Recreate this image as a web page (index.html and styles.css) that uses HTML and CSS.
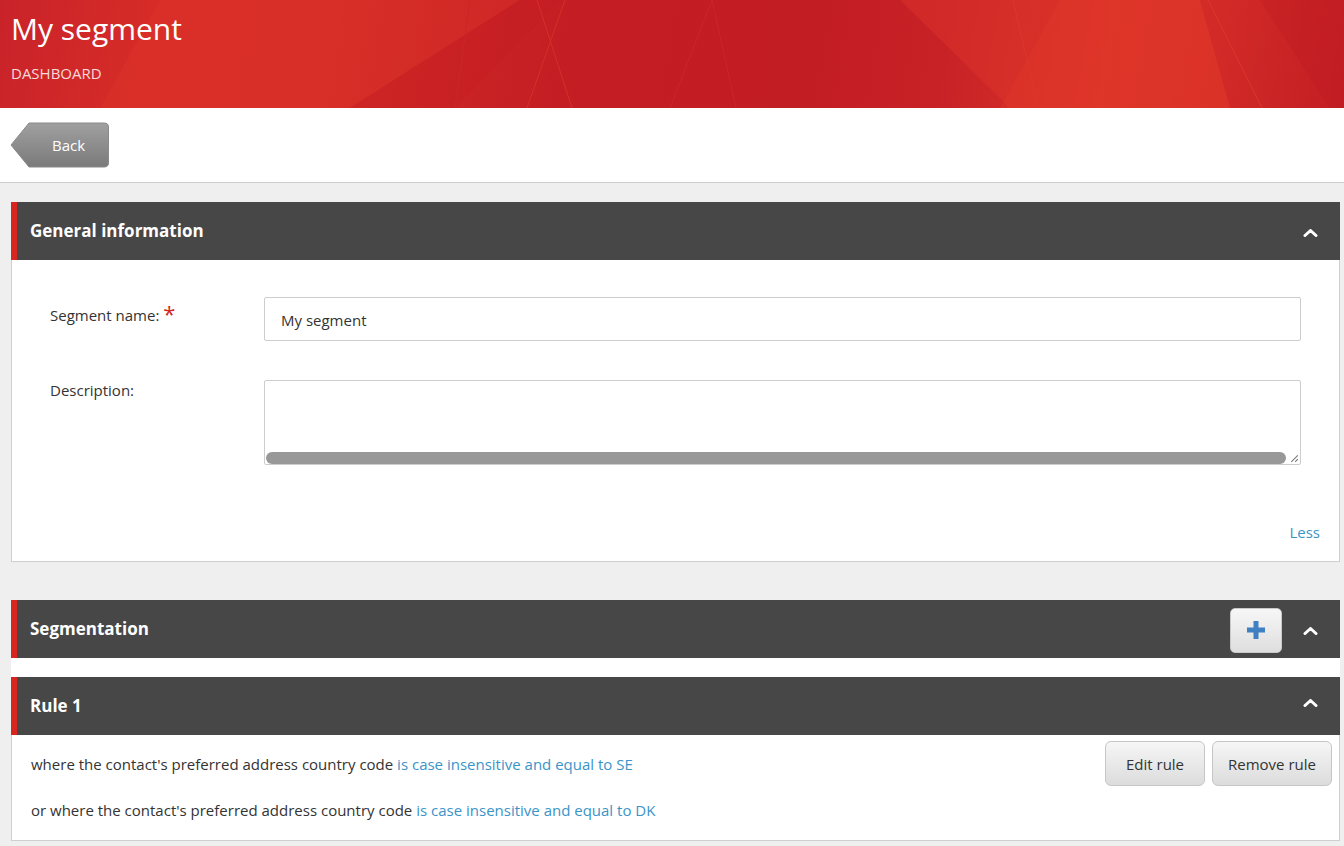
FILE: index.html
```html
<!DOCTYPE html>
<html lang="en">
<head>
<meta charset="utf-8">
<title>My segment</title>
<link rel="stylesheet" href="styles.css">
</head>
<body>
<header class="hero">
  <svg class="hero-art" viewBox="0 0 1344 108" preserveAspectRatio="none" aria-hidden="true">
    <polygon points="100,108 160,0 520,0 350,108" fill="#e0392c" opacity="0.3"/>
    <polygon points="350,108 520,0 560,0 455,108" fill="#c21a21" opacity="0.3"/>
    <polygon points="900,0 1010,108 1230,108 1200,0 1060,0" fill="#e0372a" opacity="0.4"/>
    <polygon points="1060,0 1200,0 1230,108 1000,108" fill="#e33a2c" opacity="0.3"/>
    <polygon points="1260,0 1344,0 1344,108 1330,108" fill="#b81820" opacity="0.25"/>
    <line x1="537" y1="0" x2="572" y2="108" stroke="#d3302a" stroke-width="1"/>
    <line x1="565" y1="0" x2="527" y2="108" stroke="#d3302a" stroke-width="1"/>
    <line x1="470" y1="0" x2="455" y2="108" stroke="#c9272a" stroke-width="1"/>
    <line x1="712" y1="0" x2="736" y2="108" stroke="#ca2629" stroke-width="1"/>
    <line x1="712" y1="0" x2="670" y2="108" stroke="#ca2629" stroke-width="1"/>
    <line x1="1013" y1="0" x2="1038" y2="108" stroke="#dc372b" stroke-width="1"/>
    <line x1="1208" y1="0" x2="1262" y2="108" stroke="#dc372b" stroke-width="1"/>
  </svg>
  <h1 class="hero-title">My segment</h1>
  <div class="hero-sub">DASHBOARD</div>
</header>

<div class="toolbar">
  <button class="back" type="button">
    <svg class="back-shape" viewBox="0 0 100 46" aria-hidden="true">
      <defs>
        <linearGradient id="bg" x1="0" y1="0" x2="0" y2="1">
          <stop offset="0" stop-color="#a0a0a0"/>
          <stop offset="1" stop-color="#7a7a7a"/>
        </linearGradient>
      </defs>
      <path d="M19,1 H94 Q98.5,1 98.5,5 V41 Q98.5,45 94,45 H19 L1,23 Z" fill="url(#bg)" stroke="#8a8a8a" stroke-width="1"/>
    </svg>
    <span class="back-label">Back</span>
  </button>
</div>

<main class="content">
  <section class="panel">
    <div class="panel-head">
      <h2 class="panel-title">General information</h2>
      <div class="head-tools">
        <svg class="chev" viewBox="0 0 15 8" aria-hidden="true"><polyline points="2,6.5 7.5,1.5 13,6.5" fill="none" stroke="#fff" stroke-width="3" stroke-linecap="round" stroke-linejoin="round"/></svg>
      </div>
    </div>
    <div class="panel-body form">
      <div class="form-row">
        <label class="form-label">Segment name: <span class="req">*</span></label>
        <div class="input">My segment</div>
      </div>
      <div class="form-row desc">
        <label class="form-label">Description:</label>
        <div class="textarea">
          <div class="scrollrow">
            <div class="hbar"></div>
            <svg class="grip" viewBox="0 0 12 12" aria-hidden="true"><line x1="4" y1="10" x2="10" y2="4" stroke="#777" stroke-width="1"/><line x1="7.5" y1="10" x2="10" y2="7.5" stroke="#777" stroke-width="1"/></svg>
          </div>
        </div>
      </div>
      <div class="less-row"><a class="link">Less</a></div>
    </div>
  </section>

  <section class="panel seg">
    <div class="panel-head">
      <h2 class="panel-title">Segmentation</h2>
      <div class="head-tools">
        <button class="add" type="button" aria-label="Add">
          <svg viewBox="0 0 18 18" aria-hidden="true"><path d="M9 0 V18 M0 9 H18" stroke="#3f7fc2" stroke-width="5"/></svg>
        </button>
        <svg class="chev" viewBox="0 0 15 8" aria-hidden="true"><polyline points="2,6.5 7.5,1.5 13,6.5" fill="none" stroke="#fff" stroke-width="3" stroke-linecap="round" stroke-linejoin="round"/></svg>
      </div>
    </div>
    <div class="seg-gap"></div>
    <div class="panel-head">
      <h2 class="panel-title">Rule 1</h2>
      <div class="head-tools">
        <svg class="chev chev-up" viewBox="0 0 15 8" aria-hidden="true"><polyline points="2,6.5 7.5,1.5 13,6.5" fill="none" stroke="#fff" stroke-width="3" stroke-linecap="round" stroke-linejoin="round"/></svg>
      </div>
    </div>
    <div class="panel-body rule">
      <div class="rule-row">
        <p class="rule-text">where the contact's preferred address country code <a class="link">is case insensitive and equal to SE</a></p>
        <div class="rule-actions">
          <button class="btn edit" type="button">Edit rule</button>
          <button class="btn remove" type="button">Remove rule</button>
        </div>
      </div>
      <div class="rule-row">
        <p class="rule-text">or where the contact's preferred address country code <a class="link">is case insensitive and equal to DK</a></p>
      </div>
    </div>
  </section>
</main>
</body>
</html>
```

FILE: styles.css
```css
* { box-sizing: border-box; }

html, body {
  margin: 0;
  padding: 0;
}

body {
  font-family: "Open Sans", "Noto Sans", "Liberation Sans", sans-serif;
  color: #333;
  background: #efefef;
  width: 1344px;
  height: 846px;
  overflow: hidden;
}

/* Header */
.hero {
  position: relative;
  height: 108px;
  padding: 8px 11px 0;
  overflow: hidden;
  background: linear-gradient(100deg, #c9232a 0%, #d72c27 12%, #d42b27 25%, #c41e24 42%, #c21d23 60%, #c82227 70%, #d93228 82%, #d12a27 90%, #c41e24 100%);
}

.hero-art {
  position: absolute;
  left: 0;
  top: 0;
  width: 100%;
  height: 100%;
}

.hero-title {
  position: relative;
  margin: 0;
  font-size: 30px;
  font-weight: 400;
  line-height: 42px;
  color: #fff;
}

.hero-sub {
  position: relative;
  margin-top: 14px;
  font-size: 15px;
  line-height: 18px;
  color: #f6dada;
}

/* Toolbar */
.toolbar {
  height: 75px;
  background: #fff;
  border-bottom: 1px solid #cfcfcf;
  padding: 14px 0 0 10px;
}

.back {
  position: relative;
  width: 100px;
  height: 46px;
  padding: 0;
  border: 0;
  background: transparent;
  font: inherit;
  cursor: pointer;
  display: flex;
  align-items: center;
  justify-content: center;
}

.back-shape {
  position: absolute;
  left: 0;
  top: 0;
  width: 100px;
  height: 46px;
}

.back-label {
  position: relative;
  margin-left: 17px;
  color: #fff;
  font-size: 15px;
}

/* Content */
.content {
  padding: 19px 4px 0 11px;
}

.panel {
  margin-bottom: 38px;
}

.panel-head {
  height: 58px;
  background: #474747;
  border-left: 6px solid #d7261f;
  display: flex;
  align-items: center;
  justify-content: space-between;
  padding: 0 22px 0 13px;
}

.panel-title {
  margin: 0;
  color: #fff;
  font-size: 17px;
  font-weight: 700;
  line-height: 24px;
}

.head-tools {
  display: flex;
  align-items: center;
  gap: 21px;
}

.chev {
  width: 15px;
  height: 8px;
  display: block;
  margin-top: 4px;
}

.chev.chev-up {
  margin-top: -6px;
}

.panel-body {
  background: #fff;
  border: 1px solid #cfcfcf;
  border-top: 0;
}

/* Form */
.form {
  height: 302px;
  padding: 37px 38px 0 38px;
}

.form-row {
  display: flex;
  align-items: flex-start;
}

.form-row.desc {
  margin-top: 39px;
}

.form-label {
  width: 214px;
  flex: none;
  font-size: 15px;
  line-height: 20px;
  height: 20px;
  margin-top: 8px;
  color: #333;
}

.form-row.desc .form-label {
  margin-top: 0;
}

.req {
  display: inline-block;
  color: #d0281e;
  font-size: 22px;
  line-height: 20px;
  height: 20px;
  vertical-align: top;
  margin-top: -2px;
}

.input {
  flex: 1;
  height: 44px;
  border: 1px solid #cdcdcd;
  border-radius: 2px;
  padding: 0 16px;
  font-size: 15px;
  line-height: 44px;
  color: #333;
}

.textarea {
  flex: 1;
  height: 85px;
  border: 1px solid #cdcdcd;
  border-radius: 2px;
  display: flex;
  flex-direction: column;
  justify-content: flex-end;
}

.scrollrow {
  display: flex;
  align-items: stretch;
  height: 13px;
}

.hbar {
  flex: 1;
  background: #989898;
  border-radius: 6px;
  margin: 1px 1px 0 1px;
}

.grip {
  width: 13px;
  height: 13px;
  display: block;
}

.less-row {
  display: flex;
  justify-content: flex-end;
  margin-top: 57px;
  margin-right: -19px;
}

.link {
  color: #3a94c8;
  text-decoration: none;
  font-size: 15px;
  line-height: 20px;
}

/* Segmentation */
.seg-gap {
  height: 19px;
  background: #fff;
}

.add {
  width: 52px;
  height: 45px;
  border: 1px solid #c9c9c9;
  border-radius: 5px;
  background: linear-gradient(#f7f7f7, #dedede);
  display: flex;
  align-items: center;
  justify-content: center;
  padding: 0;
  margin-top: 2px;
}

.add svg {
  width: 18px;
  height: 18px;
  display: block;
}

.rule {
  padding: 6px 7px 7px 19px;
}

.rule-row {
  min-height: 46px;
  display: flex;
  align-items: center;
  justify-content: space-between;
}

.rule-text {
  margin: 0;
  font-size: 15px;
  line-height: 20px;
  color: #333;
}

.rule-actions {
  display: flex;
  gap: 7px;
  margin-top: -1px;
}

.btn {
  height: 45px;
  border: 1px solid #c6c6c6;
  border-radius: 6px;
  background: linear-gradient(#f6f6f6, #dcdcdc);
  font-family: inherit;
  font-size: 15px;
  color: #333;
  padding: 0;
}

.btn.edit { width: 100px; }
.btn.remove { width: 120px; }
```
